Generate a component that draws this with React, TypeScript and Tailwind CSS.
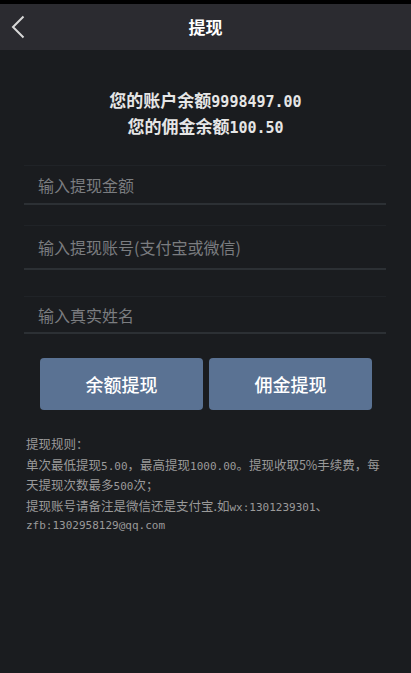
import { useState } from 'react';

const cjk = "font-['Noto_Sans_CJK_SC',sans-serif]";

function Field({ placeholder, className }: { placeholder: string; className: string }) {
    const [value, setValue] = useState('');
    return (
        <div className={`border-t border-t-[#202327] border-b-2 border-b-[#2c3034] flex items-center ${className}`}>
            <input
                value={value}
                onChange={(e) => setValue(e.target.value)}
                placeholder={placeholder}
                className="w-full bg-transparent pl-[14px] text-[16px] text-[#d0d0d0] placeholder:text-[#7b7d80] outline-none"
            />
        </div>
    );
}

export default function App() {
    const mono = "font-['DejaVu_Sans_Mono',monospace] text-[11px]";

    return (
        <div className={`min-h-[673px] bg-[#1a1c1f] ${cjk}`}>
            <div className="h-[4px] bg-black" />

            {/* Header */}
            <header className="relative h-[46px] bg-[#2b2b30] flex items-center justify-center">
                <button className="absolute left-[8px] top-[10px] w-[20px] h-[26px] flex items-center justify-center">
                    <svg width="14" height="24" viewBox="0 0 14 24" fill="none">
                        <path d="M12.5 1.5 L2 12 L12.5 22.5" stroke="#d8d8d8" strokeWidth="2" />
                    </svg>
                </button>
                <h1 className="text-[17px] font-bold text-white">提现</h1>
            </header>

            {/* Balances */}
            <div className="pt-[37px] text-center text-[#e6e6e6] font-bold">
                <p className="h-[26px] leading-[26px] text-[17px]">
                    您的账户余额<span className="font-['DejaVu_Sans_Mono',monospace] text-[15px]">9998497.00</span>
                </p>
                <p className="h-[26px] leading-[26px] text-[17px]">
                    您的佣金余额<span className="font-['DejaVu_Sans_Mono',monospace] text-[15px]">100.50</span>
                </p>
            </div>

            {/* Form */}
            <div className="mt-[26px] ml-[24px] mr-[25px]">
                <Field placeholder="输入提现金额" className="h-[40px]" />
                <Field placeholder="输入提现账号(支付宝或微信)" className="mt-[20px] h-[45px]" />
                <Field placeholder="输入真实姓名" className="mt-[26px] h-[38px]" />
            </div>

            <div className="mt-[24px] pl-[40px] pr-[39px] flex gap-[6px]">
                <button className="flex-1 h-[52px] rounded-[4px] bg-[#5a7293] text-white text-[18px] font-medium">
                    余额提现
                </button>
                <button className="flex-1 h-[52px] rounded-[4px] bg-[#5a7293] text-white text-[18px] font-medium">
                    佣金提现
                </button>
            </div>

            {/* Rules */}
            <div className="mt-[24px] pl-[26px] text-[12.5px] text-[#9a9a9a] whitespace-nowrap">
                <p className="h-[20.5px] leading-[20.5px]">提现规则：</p>
                <p className="h-[20.5px] leading-[20.5px]">
                    单次最低提现<span className={mono}>5.00</span>，最高提现<span className={mono}>1000.00</span>。提现收取5%手续费，每
                </p>
                <p className="h-[20.5px] leading-[20.5px]">
                    天提现次数最多<span className={mono}>500</span>次；
                </p>
                <p className="h-[20.5px] leading-[20.5px]">
                    提现账号请备注是微信还是支付宝.如<span className={mono}>wx:1301239301</span>、
                </p>
                <p className={`h-[20.5px] leading-[20.5px] ${mono}`}>zfb:1302958129@qq.com</p>
            </div>
        </div>
    );
}
